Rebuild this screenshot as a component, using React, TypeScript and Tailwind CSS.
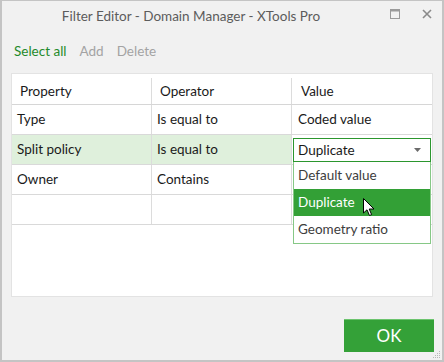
import React from 'react';

const rows = [
  { prop: 'Type', op: 'Is equal to', value: 'Coded value' },
  { prop: 'Split policy', op: 'Is equal to', value: 'Duplicate', active: true },
  { prop: 'Owner', op: 'Contains', value: '' },
  { prop: '', op: '', value: '' },
];

const options = ['Default value', 'Duplicate', 'Geometry ratio'];

function Cursor() {
  return (
    <svg className="absolute left-[69px] top-[9px]" width="12" height="19" viewBox="0 0 12 19">
      <path d="M0.5 0.5 L0.5 15 L4 11.8 L6.5 17.5 L8.6 16.6 L6.2 11 L11 11 Z" fill="#fff" stroke="#000" strokeWidth="1" strokeLinejoin="round" />
    </svg>
  );
}

export default function App() {
  return (
    <div
      className="w-[444px] h-[362px] bg-[#f1f1f1] border-l-2 border-r-2 border-b-2 border-t border-[#c4c4c4] flex flex-col relative overflow-hidden"
      style={{ fontFamily: 'Lato, "Noto Sans", sans-serif' }}
    >
      {/* title bar */}
      <div className="h-[30px] flex items-center relative shrink-0">
        <div className="flex-1 text-center text-[13.5px] text-[#5c5c5c] pr-[62px]">Filter Editor - Domain Manager - XTools Pro</div>
        <div className="absolute right-[10px] top-[8px] flex items-center gap-[22px]">
          <svg width="10" height="10" viewBox="0 0 10 10">
            <rect x="0.5" y="0.5" width="9" height="9" fill="none" stroke="#9a9a9a" />
            <rect x="0.5" y="0.5" width="9" height="2" fill="#9a9a9a" />
          </svg>
          <svg width="10" height="10" viewBox="0 0 10 10">
            <path d="M1 1 L9 9 M9 1 L1 9" stroke="#8a8a8a" strokeWidth="1.6" />
          </svg>
        </div>
      </div>

      {/* toolbar */}
      <div className="h-[42px] flex items-center gap-[13px] px-[12px] text-[13.5px] shrink-0 pb-[2px]">
        <span className="text-[#1f8a2a]">Select all</span>
        <span className="text-[#a3a3a3]">Add</span>
        <span className="text-[#a3a3a3]">Delete</span>
      </div>

      {/* grid */}
      <div className="mx-[9px] h-[224px] bg-white border border-[#e3e3e3] relative shrink-0 text-[13.5px] text-[#1a1a1a]">
        <div className="grid grid-cols-[140px_140px_1fr] h-[31px] border-b border-[#d6d6d6]">
          <div className="flex items-center pl-[8px] border-r border-[#dcdcdc] mt-[4px]">Property</div>
          <div className="flex items-center pl-[8px] border-r border-[#dcdcdc] mt-[4px]">Operator</div>
          <div className="flex items-center pl-[9px] mt-[4px]">Value</div>
        </div>
        {rows.map((r, i) => (
          <div key={i} className={`grid grid-cols-[140px_140px_1fr] h-[30px] border-b border-[#d9d9d9] ${r.active ? 'bg-[#dff0dc]' : ''}`}>
            <div className="flex items-center pl-[5px] border-r border-[#dcdcdc]">{r.prop}</div>
            <div className="flex items-center pl-[5px] border-r border-[#dcdcdc]">{r.op}</div>
            {r.active ? (
              <div className="bg-white pl-[1px] pr-[1px] pt-[3px] pb-[2px] relative">
                <div className="h-[24px] border border-[#2b962e] flex items-center pl-[4px] pr-[9px] justify-between">
                  <span>Duplicate</span>
                  <svg width="7" height="4" viewBox="0 0 7 4"><path d="M0 0 L7 0 L3.5 4 Z" fill="#6b6b6b" /></svg>
                </div>
                <div className="absolute left-[1px] right-[1px] top-[27px] bg-white border border-[#86c886] border-t-0 z-10 text-[#3d3d3d]">
                  {options.map((o) => (
                    <div
                      key={o}
                      className={`h-[27px] flex items-center pl-[4px] relative ${o === 'Duplicate' ? 'bg-[#33a036] text-white' : ''}`}
                    >
                      {o}
                      {o === 'Duplicate' && <Cursor />}
                    </div>
                  ))}
                </div>
              </div>
            ) : (
              <div className="flex items-center pl-[6px]">{r.value}</div>
            )}
          </div>
        ))}
      </div>

      {/* footer */}
      <div className="flex-1 flex items-end justify-end pr-[8px] pb-[8px]">
        <button className="w-[90px] h-[33px] bg-[#34a138] border-t border-[#6cc46e] text-white text-[17px] flex items-center justify-center">
          OK
        </button>
      </div>

      {/* resize grip */}
      <svg className="absolute right-[1px] bottom-[1px]" width="8" height="8" viewBox="0 0 8 8">
        {[
          [6, 0], [6, 2], [4, 2], [6, 4], [4, 4], [2, 4], [6, 6], [4, 6], [2, 6], [0, 6],
        ].map(([x, y], k) => (
          <rect key={k} x={x} y={y} width="1" height="1" fill="#b8b8b8" />
        ))}
      </svg>
    </div>
  );
}
